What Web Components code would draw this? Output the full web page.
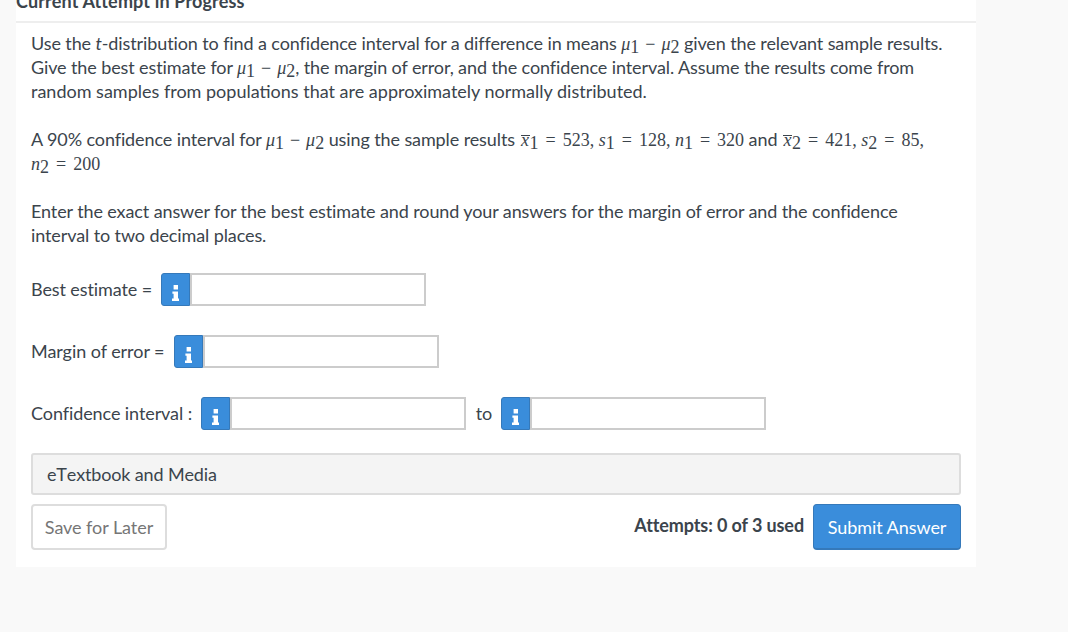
<!DOCTYPE html>
<html lang="en"><head><meta charset="utf-8"><title>Current Attempt in Progress</title>
<style>
html,body{margin:0;padding:0;height:632px;overflow:hidden;background:#f9f9f9}
body{font-family:Lato,"Liberation Sans",sans-serif;color:#3b444c}
</style></head><body>
<q-card>
<span slot="title">Current Attempt in Progress</span>
<q-para>Use the <i>t</i>-distribution to find a confidence interval for a difference in means <q-m><i class="g">μ</i><sub>1</sub><b class="op tight">−</b><i class="g">μ</i><sub>2</sub></q-m> given the relevant sample results. Give the best estimate for <q-m><i class="g">μ</i><sub>1</sub><b class="op tight">−</b><i class="g">μ</i><sub>2</sub></q-m>, the margin of error, and the confidence interval. Assume the results come from <span style="letter-spacing:0">random samples from populations that are approximately normally distributed.</span></q-para>
<q-para>A 90% confidence interval for <q-m><i class="g">μ</i><sub>1</sub><b class="op tight">−</b><i class="g">μ</i><sub>2</sub></q-m> using the sample results <q-m><i class="o">x</i><sub>1</sub><b class="op">=</b>523,<i class="v">s</i><sub>1</sub><b class="op">=</b>128,<i class="v">n</i><sub>1</sub><b class="op">=</b>320</q-m> and <q-m><i class="o">x</i><sub>2</sub><b class="op">=</b>421,<i class="v">s</i><sub>2</sub><b class="op">=</b>85,</q-m> <q-m><i>n</i><sub>2</sub><b class="op">=</b>200</q-m></q-para>
<q-para class="last">Enter the exact answer for the best estimate and round your answers for the margin of error and the confidence interval to two decimal places.</q-para>
<q-row>Best estimate =<q-input></q-input></q-row>
<q-row style="letter-spacing:-.05px">Margin of error =<q-input></q-input></q-row>
<q-row style="letter-spacing:-.085px">Confidence interval :<q-input></q-input><span class="to" slot="after">to</span><q-input slot="after"></q-input></q-row>
<q-panel>eTextbook and Media</q-panel>
<q-actions><span slot="attempts">Attempts: 0 of 3 used</span></q-actions>
</q-card>
<script>
function def(name, css, html){
  customElements.define(name, class extends HTMLElement{
    constructor(){super();const r=this.attachShadow({mode:'open'});r.innerHTML='<style>'+css+'</style>'+html;}
  });
}
def('q-card',`:host{display:block;box-sizing:border-box;width:960px;height:581px;margin:-14px 0 0 16px;background:#fff;padding:0 15px}
h2{margin:0 -15px;padding:0;height:35px;box-sizing:content-box;border-bottom:2px solid #eee;font:700 18px/31px Lato,sans-serif;letter-spacing:.15px;color:#3b444c}
.pad{padding-top:8px}`,
`<h2><slot name="title"></slot></h2><div class="pad"><slot></slot></div>`);
def('q-para',`:host{display:block;font-size:18px;line-height:24px;margin-bottom:24px;color:#3b444c;width:925px;letter-spacing:-.105px}
:host(.last){margin-bottom:26px}`,`<slot></slot>`);
def('q-m',`:host{display:inline;font:18px "Liberation Serif",serif;letter-spacing:0;color:#3b444c;white-space:nowrap}
::slotted(i){font-style:italic}
::slotted(sub){font-size:18px;vertical-align:-3px;line-height:0}
::slotted(b.op){font-weight:400;margin:0 7px}
::slotted(b.tight){margin:0 6px}
::slotted(i.o){display:inline-block;line-height:9px;border-top:1px solid #3b444c;padding:0 .5px;margin-left:1.2px}
::slotted(i.v){margin-left:4.5px}`,`<slot></slot>`);
def('q-input',`:host{display:flex;height:33px}
.i{width:29px;box-sizing:border-box;background:#3a8ddb;border:1px solid #3579ba;border-radius:3px 0 0 3px;display:flex;justify-content:center;padding-top:11px}
svg{display:block;width:7px;height:16px}
.f{width:236px;box-sizing:border-box;border:2px solid #ccc;background:#fff}`,
`<div class="i" aria-label="info"><svg viewBox="0 0 7 16"><path fill="#fff" d="M1.6 0H6V4.6H1.6ZM.4 6.6H6V13.4H7V16H0V13.4H1.6V8.8H.4Z"/></svg></div><div class="f"></div>`);
def('q-row',`:host{display:flex;align-items:flex-start;height:33px;margin-bottom:29px;font-size:18px;line-height:32px;color:#3b444c;gap:9.3px;letter-spacing:-.1px}
slot[name=after]{display:contents}
::slotted(.to){margin-right:-.8px}`,`<slot></slot><slot name="after"></slot>`);
def('q-panel',`:host{display:block;box-sizing:border-box;height:42px;margin-top:-6px;padding:0 14px;background:#f4f4f4;border:2px solid #ddd;border-radius:3px;font-size:18px;line-height:38px;color:#3b444c;font-kerning:none;letter-spacing:-.15px}`,`<slot></slot>`);
def('q-actions',`:host{display:flex;align-items:flex-start;margin-top:9px;height:46px;font-size:18px}
.s{box-sizing:border-box;height:46px;width:136px;border:2px solid #ddd;border-radius:4px;background:#fff;color:#767676;font-size:18px;line-height:42px;text-align:center;letter-spacing:-.05px}
.a{margin-left:auto;font-weight:700;color:#3b444c;line-height:42px;margin-right:9px;letter-spacing:-.1px}
.b{box-sizing:border-box;height:46px;width:148px;border:1px solid #3579ba;border-bottom-width:2px;border-radius:4px;background:#3a8ddb;color:#fff;font-size:18px;line-height:45px;text-align:center;letter-spacing:-.05px}`,
`<div class="s">Save for Later</div><div class="a"><slot name="attempts"></slot></div><div class="b">Submit Answer</div>`);
</script>
</body></html>
